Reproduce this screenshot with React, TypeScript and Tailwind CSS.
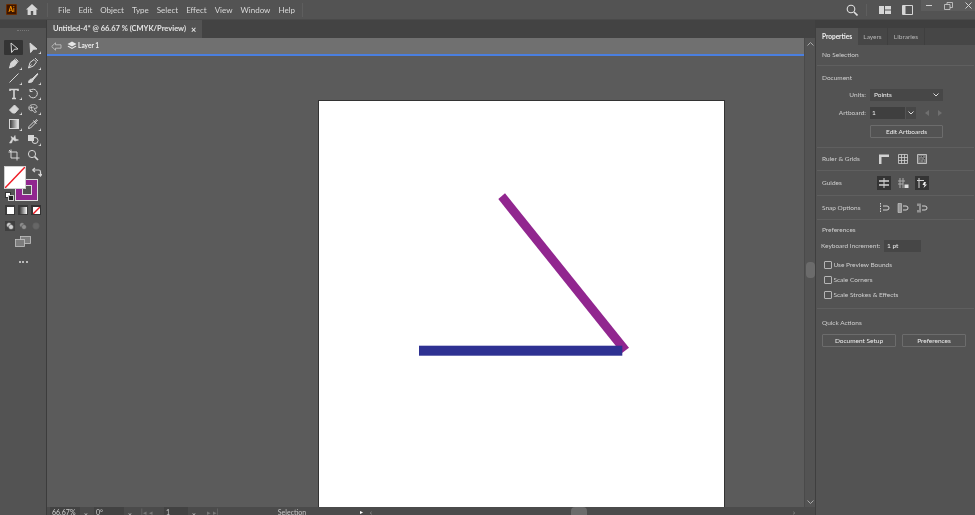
import React from 'react'

const ink = '#d6d6d6'

// little svg wrapper for the 12x12 tool glyphs
function Ico({ children, size = 12 }: { children: React.ReactNode; size?: number }) {
  return (
    <svg width={size} height={size} viewBox="0 0 12 12" fill="none" stroke={ink} strokeWidth="1">
      {children}
    </svg>
  )
}

const tools: { key: string; corner?: boolean; selected?: boolean; icon: React.ReactNode }[] = [
  { key: 'select', selected: true, icon: <path d="M3 1 L10 7 L6.2 7.3 L3.6 10.5 Z" /> },
  { key: 'direct', corner: true, icon: <path d="M3 1 L10 7 L6.2 7.3 L3.6 10.5 Z" fill={ink} /> },
  { key: 'pen', corner: true, icon: <path d="M1.5 11 L3 5.5 L7 2.5 L9.5 5 L6.5 9 Z M1.5 11 L4.5 7.5 M7.5 1.5 L10.5 4.5" fill={ink} /> },
  { key: 'curve', corner: true, icon: <path d="M1.5 11 L3 5.5 L7 2.5 L9.5 5 L6.5 9 Z M1.5 11 L4.5 7.5 M8 1 L11 4" /> },
  { key: 'line', corner: true, icon: <path d="M1.5 10.5 L10.5 1.5" /> },
  { key: 'brush', corner: true, icon: <path d="M1.5 10.5 C2 7.5 3.5 7 5 7 L10.5 1.5 L11 2 L6 8 C6 9.5 4.5 11 1.5 10.5 Z" fill={ink} /> },
  { key: 'type', corner: true, icon: <path d="M2 3 V1.5 H10 V3 M6 1.5 V10.5 M4 10.5 H8" strokeWidth="1.6" /> },
  { key: 'rotate', corner: true, icon: <path d="M3 2.5 A4.3 4.3 0 1 1 2 7 M3 1 V3.5 H5.5" /> },
  { key: 'eraser', corner: true, icon: <path d="M1.5 7 L6.5 2 L10.5 6 L7 10 L4.5 10 Z" fill={ink} /> },
  { key: 'lasso', corner: true, icon: <path d="M2 6 C1 3 4 1.5 6.5 1.5 C9 1.5 10.5 3 10 5 L7 5.5 L9.5 9 L7.5 9.5 L6 7.5 C4 8 2.5 7.5 2 6 Z M4 2.5 L5 7.5 M2 5 L7 4" strokeWidth="0.8" /> },
  { key: 'gradient', corner: true, icon: (
    <>
      <defs>
        <linearGradient id="gr">
          <stop offset="0" stopColor="#333" />
          <stop offset="1" stopColor="#eee" />
        </linearGradient>
      </defs>
      <rect x="1.5" y="1.5" width="9" height="9" fill="url(#gr)" />
    </>
  ) },
  { key: 'eyedrop', corner: true, icon: <path d="M1.5 10.5 L2 8.5 L7 3.5 L8.5 5 L3.5 10 Z M6.5 2.5 L9.5 5.5 M8 3.5 L9.5 1.5 L10.5 2.5 L8.5 4" /> },
  { key: 'puppet', icon: <path d="M1.5 10 L4 6 L3 3.5 L5.5 5 L7 2.5 L7.5 6 L10.5 7 L7 8 L5 6.5 L3.5 10 Z" fill={ink} strokeWidth="0.6" /> },
  { key: 'blend', corner: true, icon: <><rect x="1.5" y="2.5" width="5" height="5" fill={ink} /><circle cx="8" cy="7.5" r="3" /></> },
  { key: 'artboard', icon: <path d="M3 0.5 V9 H11.5 M0.5 3 H9 V11.5 M3 3 L1 1" /> },
  { key: 'zoom', icon: <><circle cx="5" cy="5" r="3.6" /><path d="M7.7 7.7 L11 11" strokeWidth="1.7" /></> },
]

const menus = ['File', 'Edit', 'Object', 'Type', 'Select', 'Effect', 'View', 'Window', 'Help']

function MenuBar() {
  return (
    <div className="h-[20px] shrink-0 flex items-center bg-[#535353] border-b border-[#4a4a4a] text-[8px] text-[#d8d8d8]">
      <div className="ml-[6px] w-[11px] h-[11px] bg-[#3d1500] border border-[#6a2c00] rounded-[1px] flex items-center justify-center text-[6.5px] font-bold text-[#ff9a00]">Ai</div>
      <svg className="ml-[9px]" width="12" height="11" viewBox="0 0 12 11" fill="#d6d6d6">
        <path d="M6 0 L12 5.5 H10.4 V11 H7.2 V7 H4.8 V11 H1.6 V5.5 H0 Z" />
      </svg>
      <div className="ml-[9px] w-px h-[14px] bg-[#5e5e5e]" />
      <div className="ml-[10px] flex gap-[8px]">
        {menus.map((m) => <span key={m}>{m}</span>)}
      </div>
      <div className="ml-[7px] w-px h-[14px] bg-[#5e5e5e]" />
      <div className="flex-1" />
      <svg width="12" height="12" viewBox="0 0 12 12" fill="none" stroke="#e0e0e0" strokeWidth="1.1">
        <circle cx="5" cy="5" r="3.8" />
        <path d="M8 8 L11.5 11.5" strokeWidth="1.6" />
      </svg>
      <div className="ml-[8px] w-px h-[12px] bg-[#5e5e5e]" />
      <svg className="ml-[12px]" width="12" height="10" viewBox="0 0 12 10" fill="#d6d6d6">
        <path d="M0 1 H5 V9 H0 Z M6 1 H12 V4.5 H6 Z M6 5.5 H12 V9 H6 Z" />
      </svg>
      <svg className="ml-[11px]" width="11" height="10" viewBox="0 0 11 10" fill="none" stroke="#d6d6d6">
        <path d="M0.5 0.5 H10.5 V9.5 H0.5 Z" />
        <path d="M1 1 H3.5 V9 H1 Z" fill="#d6d6d6" strokeWidth="0" />
      </svg>
      <div className="ml-[8px] self-start h-[11px] w-[54px] bg-[#5c5c5c] flex items-center pl-[5px] gap-[12px] text-[#cfcfcf]">
        <span className="w-[6px] h-px bg-[#cfcfcf]" />
        <svg width="9" height="8" viewBox="0 0 9 8" fill="none" stroke="#cfcfcf" strokeWidth="0.8">
          <path d="M0.5 2.5 H6 V7.5 H0.5 Z M3 2.5 V0.5 H8.5 V5.5 H6" />
        </svg>
        <svg width="7" height="7" viewBox="0 0 7 7" stroke="#cfcfcf">
          <path d="M0.5 0.5 L6.5 6.5 M6.5 0.5 L0.5 6.5" />
        </svg>
      </div>
    </div>
  )
}

function ToolBar() {
  return (
    <div className="w-[47px] shrink-0 bg-[#535353] border-r border-[#3c3c3c] flex flex-col items-center">
      <div className="w-full h-[8px] bg-[#434343]" />
      <div className="mt-[2px] w-[12px] h-[2px] border-t border-dotted border-[#777]" />
      <div className="mt-[8px] grid grid-cols-[19px_19px] auto-rows-[15.3px]">
        {tools.map((t) => (
          <div key={t.key} className={`relative flex items-center justify-center ${t.selected ? 'bg-[#343434] rounded-[1px]' : ''}`}>
            <Ico>{t.icon}</Ico>
            {t.corner && <span className="absolute right-[1px] bottom-[1px] w-0 h-0 border-l-[2px] border-t-[2px] border-l-transparent border-t-transparent border-r-[1px] border-b-[1px] border-r-[#ddd] border-b-[#ddd]" />}
          </div>
        ))}
      </div>
      {/* fill and stroke */}
      <div className="relative mt-[4px] w-[40px] h-[37px] self-start ml-[3px]">
        <div className="absolute left-[12px] top-[13px] w-[23px] h-[22px] bg-[#91268f] border border-[#ddd] flex items-center justify-center">
          <div className="w-[10px] h-[10px] bg-[#535353] border border-[#ddd]" />
        </div>
        <svg className="absolute left-[1px] top-0" width="22" height="23" viewBox="0 0 22 23">
          <rect width="22" height="23" fill="#ffffff" />
          <path d="M0 23 L22 0" stroke="#ee1c25" strokeWidth="1.5" />
          <rect x="0.5" y="0.5" width="21" height="22" fill="none" stroke="#cfcfcf" />
        </svg>
        <svg className="absolute left-[29px] top-[1px]" width="10" height="10" viewBox="0 0 10 10" fill="none" stroke="#d6d6d6" strokeWidth="1.2">
          <path d="M1.5 3 H7 C8 3 8.5 4 8.5 5 V8 M0.5 3 L3 1 M0.5 3 L3 5 M6.5 7 L8.5 9 L10 7" />
        </svg>
        <div className="absolute left-[2px] top-[26px] w-[9px] h-[9px] flex items-center justify-center">
          <div className="absolute left-0 top-0 w-[6px] h-[6px] bg-white border border-[#333]" />
          <div className="absolute right-0 bottom-0 w-[6px] h-[6px] bg-[#222] border border-[#ccc]" />
        </div>
      </div>
      <div className="mt-[2px] flex gap-[3px]">
        <div className="w-[10px] h-[10px] flex items-center justify-center bg-[#3a3a3a]"><div className="w-[7px] h-[7px] bg-white" /></div>
        <div className="w-[10px] h-[10px] flex items-center justify-center bg-[#3a3a3a]"><div className="w-[7px] h-[7px] bg-gradient-to-r from-[#444] to-white" /></div>
        <div className="w-[10px] h-[10px] bg-[#333] flex items-center justify-center">
          <svg width="7" height="7" viewBox="0 0 7 7"><rect width="7" height="7" fill="#fff" /><path d="M0 7 L7 0" stroke="#ee1c25" strokeWidth="1.4" /></svg>
        </div>
      </div>
      <div className="mt-[6px] flex gap-[3px]">
        <div className="w-[10px] h-[10px] bg-[#3f3f3f] flex items-center justify-center">
          <svg width="8" height="8" viewBox="0 0 8 8" fill="#d0d0d0" stroke="#333" strokeWidth="0.5"><circle cx="3" cy="3" r="2.5" /><circle cx="5" cy="5" r="2.5" /></svg>
        </div>
        <div className="w-[10px] h-[10px] flex items-center justify-center">
          <svg width="8" height="8" viewBox="0 0 8 8" fill="#8f8f8f" stroke="#444" strokeWidth="0.5"><circle cx="3" cy="3" r="2.5" /><circle cx="5" cy="5" r="2.5" /></svg>
        </div>
        <div className="w-[10px] h-[10px] flex items-center justify-center">
          <svg width="8" height="8" viewBox="0 0 8 8" fill="#666" stroke="#5a5a5a" strokeWidth="0.5"><circle cx="4" cy="4" r="3.4" /></svg>
        </div>
      </div>
      <svg className="mt-[5px]" width="16" height="11" viewBox="0 0 16 11" fill="#7d7d7d" stroke="#c4c4c4" strokeWidth="0.8">
        <rect x="5.5" y="0.5" width="10" height="7" />
        <rect x="0.5" y="3.5" width="9" height="7" />
      </svg>
      <div className="mt-[14px] flex gap-[1.5px]">
        <span className="w-[2px] h-[2px] rounded-full bg-[#ddd]" />
        <span className="w-[2px] h-[2px] rounded-full bg-[#ddd]" />
        <span className="w-[2px] h-[2px] rounded-full bg-[#ddd]" />
      </div>
    </div>
  )
}

function Canvas() {
  return (
    <div className="flex-1 flex flex-col min-w-0">
      <div className="h-[18px] shrink-0 bg-[#434343] flex">
        <div className="w-[155px] bg-[#535353] flex items-center pl-[6px] text-[7.5px] font-bold text-[#e4e4e4] whitespace-nowrap">
          <span>Untitled-4* @ 66.67 % (CMYK/Preview)</span>
          <span className="ml-[5px] text-[9px] leading-none">×</span>
        </div>
      </div>
      <div className="flex-1 flex min-h-0">
        <div className="flex-1 flex flex-col min-w-0">
          <div className="h-[16px] shrink-0 bg-[#707070] flex items-center pl-[4px] text-[6.5px] font-bold text-[#eee]">
            <svg width="11" height="9" viewBox="0 0 11 9" fill="none" stroke="#c8c8c8" strokeWidth="0.8">
              <path d="M0.7 4.5 L4.5 0.8 V2.8 H10 V6.2 H4.5 V8.2 Z" />
            </svg>
            <svg className="ml-[5px]" width="10" height="10" viewBox="0 0 10 10" fill="#e6e6e6">
              <path d="M5 0.5 L9.5 3 L5 5.5 L0.5 3 Z M1.5 4.8 L5 6.8 L8.5 4.8 L9.5 5.5 L5 8 L0.5 5.5 Z" />
            </svg>
            <span className="ml-[1px]">Layer 1</span>
          </div>
          <div className="h-[2px] shrink-0 bg-[#4a7fe0]" />
          <div className="flex-1 min-h-0 bg-[#5b5b5b] overflow-hidden pt-[45px] pl-[272px]">
            <div className="w-[405px] h-[407px] bg-white outline outline-1 outline-[#333]">
              <svg width="405" height="407" viewBox="0 0 405 407">
                <polygon points="179.3,98 186,92.3 310,246.7 302.7,252.3" fill="#91268f" />
                <rect x="100" y="244.7" width="203.3" height="10" fill="#2e3192" />
              </svg>
            </div>
          </div>
        </div>
        <div className="w-[11px] shrink-0 bg-[#535353] border-l border-[#4a4a4a] flex flex-col items-center justify-between pt-[4px] pb-[3px]">
          <svg width="7" height="4" viewBox="0 0 7 4" fill="none" stroke="#aaa"><path d="M0.5 3.5 L3.5 0.5 L6.5 3.5" /></svg>
          <div className="w-[9px] h-[16px] rounded-[4px] bg-[#6b6b6b] mb-[7px]" />
          <svg width="7" height="4" viewBox="0 0 7 4" fill="none" stroke="#aaa"><path d="M0.5 0.5 L3.5 3.5 L6.5 0.5" /></svg>
        </div>
      </div>
      <div className="h-[8px] shrink-0 bg-[#4b4b4b] flex text-[7px] leading-[10px] text-[#cfcfcf] overflow-hidden whitespace-nowrap">
        <div className="ml-[3px] w-[30px] bg-[#424242] pl-[2px] h-full">66.67%</div>
        <span className="w-[12px] text-center">⌄</span>
        <div className="ml-[2px] w-[30px] bg-[#424242] pl-[2px] h-full">0°</div>
        <span className="w-[12px] text-center">⌄</span>
        <span className="ml-[5px] w-[21px] text-[#777]">|◂ ◂</span>
        <div className="ml-[2px] w-[24px] bg-[#424242] pl-[2px] h-full">1</div>
        <span className="w-[12px] text-center">⌄</span>
        <span className="ml-[7px] w-[20px] text-[#777]">▸ ▸|</span>
        <span className="ml-[2px] w-[126px] text-center text-[#c4c4c4]">Selection</span>
        <span className="ml-[5px] text-white text-[6px]">▸</span>
        <span className="ml-[7px] text-[#aaa]">‹</span>
        <div className="ml-[199px] w-[16px] h-full rounded-t-[4px] bg-[#6b6b6b]" />
        <span className="ml-[206px] text-[#aaa]">›</span>
      </div>
    </div>
  )
}

function Divider() {
  return <div className="h-px bg-[#5f5f5f] mx-[1px]" />
}

function IconBtn({ active, children }: { active?: boolean; children: React.ReactNode }) {
  return (
    <div className={`w-[14px] h-[14px] flex items-center justify-center ${active ? 'bg-[#343434]' : ''}`}>
      <svg width="12" height="12" viewBox="0 0 12 12" fill="none" stroke="#d2d2d2">{children}</svg>
    </div>
  )
}

function IconRow({ label, items, h }: { label: string; items: React.ReactNode[]; h: string }) {
  return (
    <div className={`${h} flex items-center pl-[6px]`}>
      <span className="w-[55px]">{label}</span>
      <div className="flex gap-[5px]">{items}</div>
    </div>
  )
}

function Check({ label }: { label: string }) {
  return (
    <div className="h-[15px] flex items-center pl-[8px]">
      <span className="w-[8px] h-[8px] border border-[#b5b5b5] rounded-[1px]" />
      <span className="ml-[1.5px]">{label}</span>
    </div>
  )
}

function PropertiesPanel() {
  return (
    <div className="w-[160px] shrink-0 bg-[#535353] border-l border-[#3f3f3f] text-[6.5px] text-[#cfcfcf] flex flex-col whitespace-nowrap">
      <div className="h-[8px] bg-[#3f3f3f]" />
      <div className="h-[17px] bg-[#464646] flex text-[#b5b5b5]">
        <div className="w-[42px] bg-[#535353] flex items-center justify-center font-bold text-[#f0f0f0]">Properties</div>
        <div className="w-[30px] flex items-center justify-center border-r border-[#3f3f3f]">Layers</div>
        <div className="w-[37px] flex items-center justify-center border-r border-[#3f3f3f]">Libraries</div>
      </div>
      <div className="h-[20px] flex items-center pl-[6px]">No Selection</div>
      <Divider />
      <div className="h-[23px] flex items-center pl-[6px]">Document</div>
      <div className="flex h-[12px] items-center">
        <span className="w-[50px] text-right">Units:</span>
        <div className="ml-[4px] w-[73px] h-[12px] bg-[#474747] flex items-center justify-between px-[4px] text-[#eee]">
          <span>Points</span>
          <svg width="6" height="4" viewBox="0 0 6 4" fill="none" stroke="#ddd"><path d="M0.5 0.5 L3 3 L5.5 0.5" /></svg>
        </div>
      </div>
      <div className="flex h-[12px] mt-[6px] items-center">
        <span className="w-[50px] text-right">Artboard:</span>
        <div className="ml-[4px] w-[35px] h-[12px] bg-[#3f3f3f] flex items-center px-[2px] text-[#eee]">1</div>
        <div className="ml-px w-[10px] h-[12px] bg-[#474747] flex items-center justify-center">
          <svg width="6" height="4" viewBox="0 0 6 4" fill="none" stroke="#ddd"><path d="M0.5 0.5 L3 3 L5.5 0.5" /></svg>
        </div>
        <span className="ml-[9px] w-0 h-0 border-y-[3px] border-y-transparent border-r-[4px] border-r-[#6f6f6f]" />
        <span className="ml-[9px] w-0 h-0 border-y-[3px] border-y-transparent border-l-[4px] border-l-[#6f6f6f]" />
      </div>
      <div className="pl-[54px] pt-[6px] pb-[9px]">
        <div className="w-[73px] h-[13px] border border-[#6c6c6c] rounded-[1px] flex items-center justify-center text-[#eee]">Edit Artboards</div>
      </div>
      <Divider />
      <IconRow label="Ruler & Grids" h="h-[22px]" items={[
        <IconBtn key="ruler"><path d="M1 11 V1.5 H11 V4 H3.5 V11 Z" fill="#d2d2d2" stroke="none" /></IconBtn>,
        <IconBtn key="grid"><path d="M1.5 1.5 H10.5 V10.5 H1.5 Z M4.5 1.5 V10.5 M7.5 1.5 V10.5 M1.5 4.5 H10.5 M1.5 7.5 H10.5" strokeWidth="0.8" /></IconBtn>,
        <IconBtn key="trans"><path d="M1.5 1.5 H10.5 V10.5 H1.5 Z" fill="#7a7a7a" strokeWidth="0.8" /><path d="M3.5 3.5 H4.5 M6 3.5 H7 M8 5.5 H9 M4.5 6 H5.5 M3.5 8 H4.5 M7 8 H8" stroke="#333" /></IconBtn>,
      ]} />
      <Divider />
      <IconRow label="Guides" h="h-[24px]" items={[
        <IconBtn key="g1" active><path d="M6 1 V11" strokeWidth="1" /><path d="M1 4 H11 M1 8 H11" strokeWidth="1.6" /></IconBtn>,
        <IconBtn key="g2"><path d="M3 1 V11 M6 1 V11 M1 4 H8 M1 7 H6" stroke="#aaa" /><rect x="7.5" y="7.5" width="4" height="3.5" fill="#ddd" stroke="none" /></IconBtn>,
        <IconBtn key="g3" active><path d="M3 1 V11 M1 3.5 H8" /><path d="M8 5 L6.5 8 H8.5 L7.5 11 L11 7.5 H9 L10 5 Z" fill="#eee" stroke="none" /></IconBtn>,
      ]} />
      <Divider />
      <IconRow label="Snap Options" h="h-[23px]" items={[
        <IconBtn key="s1"><path d="M2.5 1 V11" strokeDasharray="1.5 1" /><path d="M5 4 H9 A2 2 0 0 1 9 8 H5" /></IconBtn>,
        <IconBtn key="s2"><path d="M1 1.5 H4.5 V10.5 H1 Z" fill="#999" strokeWidth="0.6" /><path d="M6 4 H9 A2 2 0 0 1 9 8 H6" /></IconBtn>,
        <IconBtn key="s3"><path d="M2 1.5 V4 M2 8 V10.5 M4 1.5 V10.5" /><path d="M6 4 H9 A2 2 0 0 1 9 8 H6" /></IconBtn>,
      ]} />
      <Divider />
      <div className="h-[20px] flex items-center pl-[6px]">Preferences</div>
      <div className="h-[12px] flex items-center pl-[5px]">
        <span className="w-[63px]">Keyboard Increment:</span>
        <div className="w-[37px] h-[12px] bg-[#464646] flex items-center px-[3px] text-[#eee]">1 pt</div>
      </div>
      <div className="h-[5px]" />
      <Check label="Use Preview Bounds" />
      <Check label="Scale Corners" />
      <Check label="Scale Strokes & Effects" />
      <div className="h-[6px]" />
      <Divider />
      <div className="h-[25px] flex items-center pl-[6px] pt-[3px]">Quick Actions</div>
      <div className="flex pl-[6px] gap-[6px] text-[#eee]">
        <div className="w-[74px] h-[13px] border border-[#6c6c6c] rounded-[1px] flex items-center justify-center">Document Setup</div>
        <div className="w-[64px] h-[13px] border border-[#6c6c6c] rounded-[1px] flex items-center justify-center">Preferences</div>
      </div>
    </div>
  )
}

export default function App() {
  return (
    <div className="w-[975px] h-[515px] overflow-hidden flex flex-col bg-[#535353] blur-[0.3px] font-['Lato',sans-serif]">
      <MenuBar />
      <div className="flex-1 flex min-h-0">
        <ToolBar />
        <Canvas />
        <PropertiesPanel />
      </div>
    </div>
  )
}
